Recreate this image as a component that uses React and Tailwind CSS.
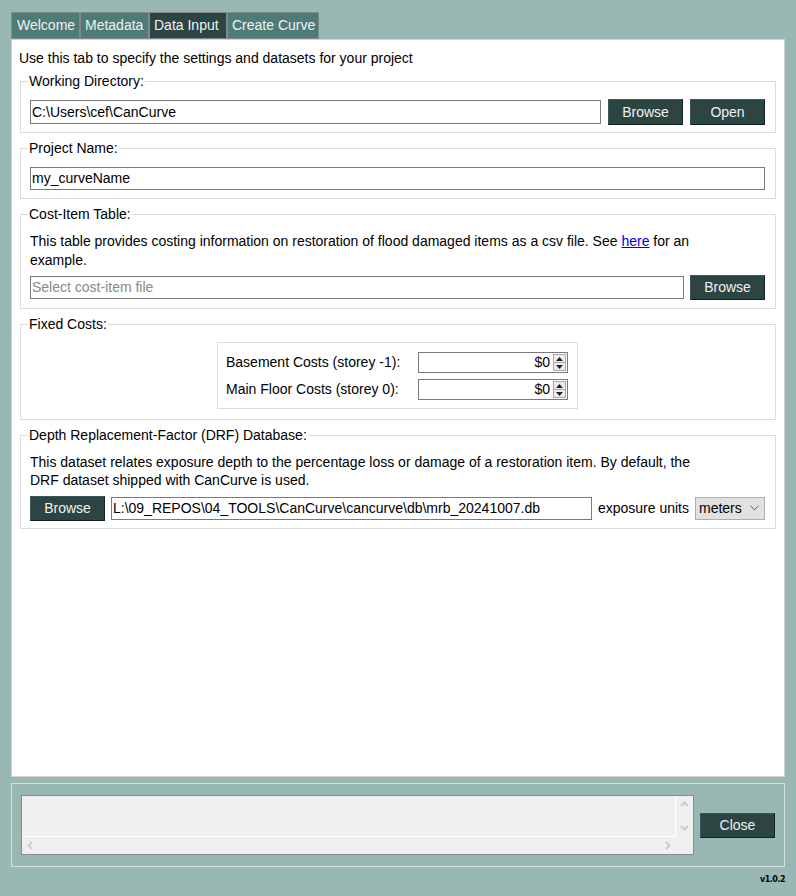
import React from "react";

const Btn = ({ children, className = "" }) => (
  <div
    className={
      "flex items-center justify-center bg-[#2c4442] text-[#eef3f2] border border-[#3c5856] border-r-[#13201f] border-b-[#13201f] h-[25px] " +
      className
    }
  >
    {children}
  </div>
);

const Input = ({ children, className = "", placeholder = false }) => (
  <div
    className={
      "flex items-center bg-white border border-[#7a7a7a] px-[1px] whitespace-nowrap overflow-hidden " +
      (placeholder ? "text-[#8a8a8a] " : "text-black ") +
      className
    }
  >
    {children}
  </div>
);

const Group = ({ title, children, className = "" }) => (
  <fieldset className={"border border-[#dcdcdc] min-w-0 " + className}>
    <legend className="ml-[-2px] px-[1px] leading-[16px]">{title}</legend>
    {children}
  </fieldset>
);

const Spin = () => (
  <div className="flex h-[21px] w-[150px] border border-[#7a7a7a] bg-white">
    <div className="flex-1 flex items-center justify-end pr-[3px]">$0</div>
    <div className="w-[13px] my-[1px] mr-[1px] flex flex-col border border-[#a8a8a8] bg-[#ececec]">
      <div className="flex-1 flex items-center justify-center border-b border-[#a8a8a8]">
        <svg width="7" height="4" viewBox="0 0 7 4"><path d="M3.5 0 L7 4 L0 4 Z" fill="#222" /></svg>
      </div>
      <div className="flex-1 flex items-center justify-center">
        <svg width="7" height="4" viewBox="0 0 7 4"><path d="M0 0 L7 0 L3.5 4 Z" fill="#222" /></svg>
      </div>
    </div>
  </div>
);

const Chev = ({ d }) => (
  <svg width="9" height="9" viewBox="0 0 9 9">
    <path d={d} fill="none" stroke="#c4c4c4" strokeWidth="1.6" />
  </svg>
);

export default function App() {
  return (
    <div className="w-[796px] h-[896px] bg-[#99b8b3] flex flex-col px-[11px] pt-[12px] font-['Liberation_Sans',Arial,sans-serif] text-[14px] text-black">
      {/* tabs */}
      <div className="flex h-[27px]">
        <div className="w-[69px] bg-[#4e7b76] text-[#eef3f2] border border-[#808b89] pl-[5px] leading-[25px] whitespace-nowrap">Welcome</div>
        <div className="w-[69px] bg-[#4e7b76] text-[#eef3f2] border border-[#808b89] pl-[4px] leading-[25px] whitespace-nowrap">Metadata</div>
        <div className="w-[78px] bg-[#2c4442] text-[#eef3f2] border border-[#808b89] pl-[4px] leading-[25px] whitespace-nowrap">Data Input</div>
        <div className="w-[92px] bg-[#4e7b76] text-[#eef3f2] border border-[#808b89] pl-[4px] leading-[25px] whitespace-nowrap">Create Curve</div>
      </div>

      {/* main panel */}
      <div className="h-[738px] bg-white border border-[#d4d4d4] px-[8px] pt-[10px] flex flex-col">
        <div className="leading-[16px] ml-[-1px]">Use this tab to specify the settings and datasets for your project</div>

        <Group title="Working Directory:" className="mt-[7px] pl-[9px] pr-[10px] pt-[10px] pb-[7px]">
          <div className="flex items-center gap-[6px] h-[26px]">
            <Input className="flex-1 h-[24px] mr-[1px]">C:\Users\cef\CanCurve</Input>
            <Btn className="w-[75px] h-[26px]">Browse</Btn>
            <Btn className="w-[75px] h-[26px] ml-[1px]">Open</Btn>
          </div>
        </Group>

        <Group title="Project Name:" className="mt-[7px] pl-[9px] pr-[10px] pt-[11px] pb-[8px]">
          <Input className="h-[23px]">my_curveName</Input>
        </Group>

        <Group title="Cost-Item Table:" className="mt-[7px] pl-[9px] pr-[10px] pt-[10px] pb-[8px]">
          <div className="leading-[19px]">
            This table provides costing information on restoration of flood damaged items as a csv file. See{" "}
            <span className="text-[#0000ee] underline">here</span> for an
            <br />
            example.
          </div>
          <div className="flex items-center gap-[6px] h-[25px] mt-[5px]">
            <Input placeholder className="flex-1 h-[23px]">Select cost-item file</Input>
            <Btn className="w-[75px] h-[25px]">Browse</Btn>
          </div>
        </Group>

        <Group title="Fixed Costs:" className="mt-[7px] pl-[9px] pr-[10px] pt-[10px] pb-[10px]">
          <div className="w-[361px] mx-auto border border-[#dcdcdc] pl-[8px] pr-[9px] pt-[9px] pb-[8px] flex flex-col gap-[6px]">
            <div className="flex items-center">
              <div className="w-[192px]">Basement Costs (storey -1):</div>
              <Spin />
            </div>
            <div className="flex items-center">
              <div className="w-[192px]">Main Floor Costs (storey 0):</div>
              <Spin />
            </div>
          </div>
        </Group>

        <Group title="Depth Replacement-Factor (DRF) Database:" className="mt-[7px] pl-[9px] pr-[10px] pt-[10px] pb-[8px]">
          <div className="leading-[18px]">
            This dataset relates exposure depth to the percentage loss or damage of a restoration item. By default, the
            <br />
            DRF dataset shipped with CanCurve is used.
          </div>
          <div className="flex items-center h-[24px] mt-[7px]">
            <Btn className="w-[75px] h-[24px]">Browse</Btn>
            <Input className="flex-1 h-[23px] ml-[6px]">L:\09_REPOS\04_TOOLS\CanCurve\cancurve\db\mrb_20241007.db</Input>
            <div className="ml-[6px] whitespace-nowrap">exposure units</div>
            <div className="ml-[6px] w-[70px] h-[23px] bg-[#e1e1e1] border border-[#adadad] flex items-center pl-[3px] pr-[5px] justify-between">
              <span>meters</span>
              <svg width="9" height="6" viewBox="0 0 9 6"><path d="M0.5 0.8 L4.5 4.8 L8.5 0.8" fill="none" stroke="#555" strokeWidth="1" /></svg>
            </div>
          </div>
        </Group>
      </div>

      {/* bottom log area */}
      <div className="mt-[6px] h-[84px] border border-[#d6e2df] flex items-center pl-[9px] pr-[9px]">
        <div className="flex-1 h-[60px] bg-[#efefef] border border-[#878c94] flex flex-col">
          <div className="flex-1 flex">
            <div className="flex-1 border-r border-b border-white"></div>
            <div className="w-[17px] flex flex-col items-center justify-between py-[4px] border-b border-[#efefef]">
              <Chev d="M1 6 L4.5 2.5 L8 6" />
              <Chev d="M1 3 L4.5 6.5 L8 3" />
            </div>
          </div>
          <div className="h-[17px] flex items-center justify-between pl-[4px] pr-[21px]">
            <Chev d="M6 1 L2.5 4.5 L6 8" />
            <Chev d="M3 1 L6.5 4.5 L3 8" />
          </div>
        </div>
        <Btn className="w-[75px] h-[25px] ml-[6px]">Close</Btn>
      </div>

      <div className="flex justify-end mt-[8px] pr-[0px]">
        <span className="text-[8px] leading-[10px] font-bold font-['DejaVu_Sans',sans-serif] tracking-[-0.5px]">v1.0.2</span>
      </div>
    </div>
  );
}
